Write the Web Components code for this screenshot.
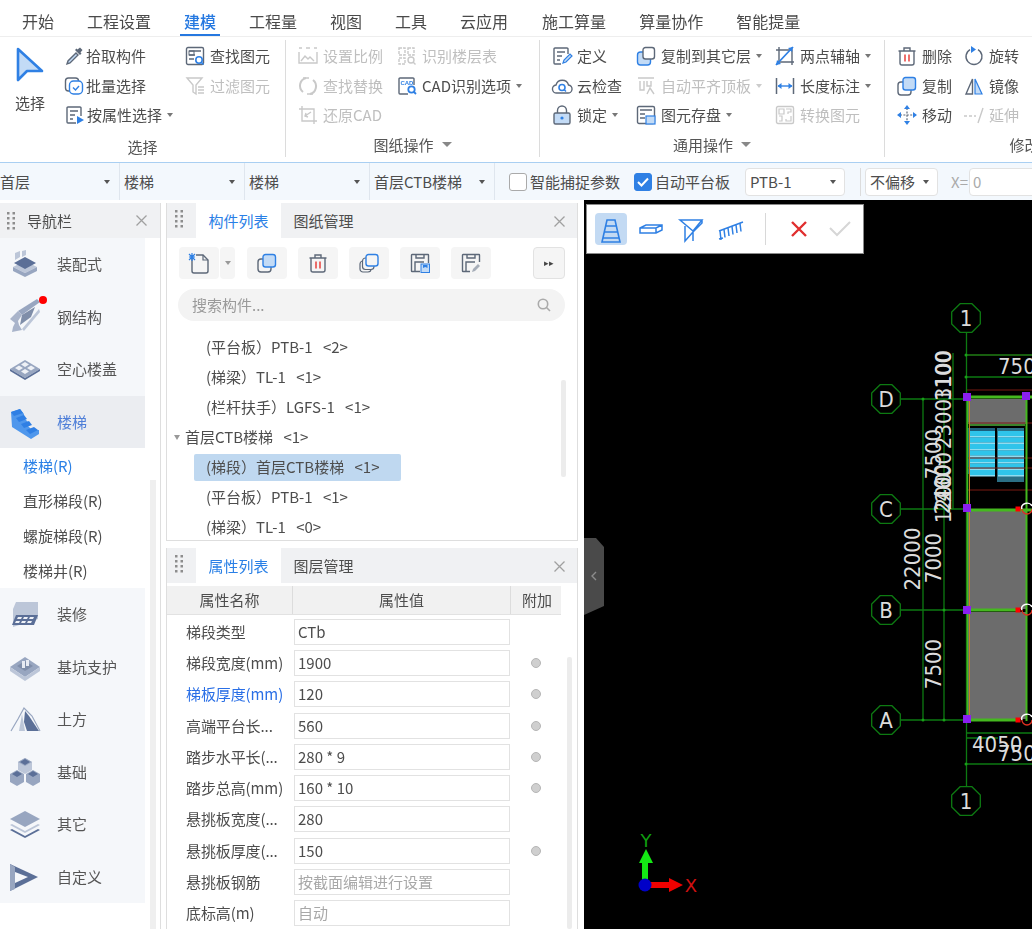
<!DOCTYPE html>
<html lang="zh">
<head>
<meta charset="utf-8">
<title>建模</title>
<style>
  html, body { margin: 0; height: 100%; overflow: hidden; background: #fff; }
  body { font: 15px/1.2 "Noto Sans CJK SC", "Liberation Sans", sans-serif; color: #4d4d4d; }
</style>
</head>
<body>
<app-shell>
  <ribbon-tabs active="建模" tabs="开始,工程设置,建模,工程量,视图,工具,云应用,施工算量,算量协作,智能提量"></ribbon-tabs>

  <ribbon-bar>
    <ribbon-group label="选择" low cols="49px 123px auto" pad="13" width="286">
      <big-tool style="grid-row: 1 / 4">选择</big-tool>
      <ribbon-item icon="pick" tight>拾取构件</ribbon-item>
      <ribbon-item icon="find">查找图元</ribbon-item>
      <ribbon-item icon="batch" tight>批量选择</ribbon-item>
      <ribbon-item icon="filter" off>过滤图元</ribbon-item>
      <ribbon-item icon="propsel" tight style="padding-left:1px" caret>按属性选择</ribbon-item>
    </ribbon-group>
    <ribbon-group label="图纸操作" more cols="99px auto" pad="12" width="254">
      <ribbon-item icon="scale" off>设置比例</ribbon-item>
      <ribbon-item icon="floor" off>识别楼层表</ribbon-item>
      <ribbon-item icon="replace" off>查找替换</ribbon-item>
      <ribbon-item icon="cadopt" caret>CAD识别选项</ribbon-item>
      <ribbon-item icon="restore" off>还原CAD</ribbon-item>
    </ribbon-group>
    <ribbon-group label="通用操作" more cols="84px 139px auto" pad="12" width="345">
      <ribbon-item icon="define">定义</ribbon-item>
      <ribbon-item icon="copyto" caret>复制到其它层</ribbon-item>
      <ribbon-item icon="twopoint" caret>两点辅轴</ribbon-item>
      <ribbon-item icon="cloud">云检查</ribbon-item>
      <ribbon-item icon="align" off caret>自动平齐顶板</ribbon-item>
      <ribbon-item icon="length" caret>长度标注</ribbon-item>
      <ribbon-item icon="lock" caret>锁定</ribbon-item>
      <ribbon-item icon="store" caret>图元存盘</ribbon-item>
      <ribbon-item icon="convert" off>转换图元</ribbon-item>
    </ribbon-group>
    <ribbon-group label="修改" cols="67px auto" pad="12" width="280">
      <ribbon-item icon="trash">删除</ribbon-item>
      <ribbon-item icon="rotate">旋转</ribbon-item>
      <ribbon-item icon="copy">复制</ribbon-item>
      <ribbon-item icon="mirror">镜像</ribbon-item>
      <ribbon-item icon="move">移动</ribbon-item>
      <ribbon-item icon="extend" off>延伸</ribbon-item>
    </ribbon-group>
  </ribbon-bar>

  <option-bar>
    <floor-select width="120" pad="0">首层</floor-select>
    <floor-select width="125">楼梯</floor-select>
    <floor-select width="125">楼梯</floor-select>
    <floor-select width="125">首层CTB楼梯</floor-select>
    <check-opt style="margin-left:14px">智能捕捉参数</check-opt>
    <check-opt checked style="margin-left:14px">自动平台板</check-opt>
    <box-select width="100" style="margin-left:15px">PTB-1</box-select>
    <bar-sep></bar-sep>
    <box-select width="73">不偏移</box-select>
    <coord-input label="X=" value="0"></coord-input>
  </option-bar>

  <main-row>
    <nav-panel>
      <nav-item icon="prefab">装配式</nav-item>
      <nav-item icon="steel" dot>钢结构</nav-item>
      <nav-item icon="hollow">空心楼盖</nav-item>
      <nav-item icon="stairs" active>楼梯</nav-item>
      <nav-sub current>楼梯(R)</nav-sub>
      <nav-sub>直形梯段(R)</nav-sub>
      <nav-sub>螺旋梯段(R)</nav-sub>
      <nav-sub>楼梯井(R)</nav-sub>
      <nav-item icon="finish">装修</nav-item>
      <nav-item icon="pit">基坑支护</nav-item>
      <nav-item icon="earth">土方</nav-item>
      <nav-item icon="found">基础</nav-item>
      <nav-item icon="other">其它</nav-item>
      <nav-item icon="custom">自定义</nav-item>
    </nav-panel>

    <mid-column>
      <dock-panel tab="构件列表" tab2="图纸管理" height="338">
        <comp-tools></comp-tools>
        <search-box placeholder="搜索构件..."></search-box>
        <tree-row>(平台板）PTB-1 &lt;2&gt;</tree-row>
        <tree-row>(梯梁）TL-1 &lt;1&gt;</tree-row>
        <tree-row>(栏杆扶手）LGFS-1 &lt;1&gt;</tree-row>
        <tree-row parent>首层CTB楼梯 &lt;1&gt;</tree-row>
        <tree-row selected>(梯段）首层CTB楼梯 &lt;1&gt;</tree-row>
        <tree-row>(平台板）PTB-1 &lt;1&gt;</tree-row>
        <tree-row>(梯梁）TL-1 &lt;0&gt;</tree-row>
        <scroll-thumb style="right:11px;top:177px;height:97px"></scroll-thumb>
      </dock-panel>
      <dock-panel tab="属性列表" tab2="图层管理" grow>
        <prop-head></prop-head>
        <prop-row value="CTb" plain>梯段类型</prop-row>
        <prop-row value="1900">梯段宽度(mm)</prop-row>
        <prop-row value="120" hot>梯板厚度(mm)</prop-row>
        <prop-row value="560">高端平台长...</prop-row>
        <prop-row value="280 * 9">踏步水平长(...</prop-row>
        <prop-row value="160 * 10">踏步总高(mm)</prop-row>
        <prop-row value="280" plain>悬挑板宽度(...</prop-row>
        <prop-row value="150">悬挑板厚度(...</prop-row>
        <prop-row value="按截面编辑进行设置" muted plain>悬挑板钢筋</prop-row>
        <prop-row value="自动" muted plain>底标高(m)</prop-row>
        <scroll-thumb style="right:5px;top:109px;bottom:0"></scroll-thumb>
      </dock-panel>
    </mid-column>

    <cad-canvas></cad-canvas>
  </main-row>
</app-shell>

<script>
const G = "#5d6878", B = "#2f80e4", L = "#c3dbf6", D = "#c9c9c9", R = "#e8403c";

// ribbon / toolbar icons, 20x20
const ICONS = {
  pick: `<path d="M12 7 4 15l-1 3 3-1 8-8z" fill="${L}" stroke="${G}" stroke-width="1.4"/><path d="M11 4l5 5 1.5-1.500-1-1 2-2.500-2.500-2.500-2.500 2-1-1z" fill="${G}"/>`,
  batch: `<rect x="1.500" y="2" width="13" height="13" rx="3" fill="none" stroke="${G}" stroke-width="1.4"/><rect x="5.500" y="5" width="13" height="13" rx="4" fill="#fff" stroke="${B}" stroke-width="1.4"/><path d="M9 11.500l2.500 2.500 3.500-4" fill="none" stroke="${B}" stroke-width="1.4"/>`,
  propsel: `<path d="M16 11V3a1 1 0 0 0-1-1H3a1 1 0 0 0-1 1v14a1 1 0 0 0 1 1h8" fill="none" stroke="${G}" stroke-width="1.4"/><path d="M5 6h8M5 10h5M5 14h3" stroke="${G}" stroke-width="1.4"/><path d="M12 11l7 4-7 4z" fill="${B}"/>`,
  find: `<rect x="1.500" y="1.500" width="17" height="17" rx="1.500" fill="none" stroke="${G}" stroke-width="1.4"/><path d="M4 5h12M4 9h6M4 13h5" stroke="${G}" stroke-width="1.4"/><rect x="4" y="5" width="5" height="4" fill="none" stroke="${G}"/><circle cx="14" cy="14" r="3.200" fill="#fff" stroke="${B}" stroke-width="1.6"/><path d="M16 16l2.500 2.500" stroke="${B}" stroke-width="1.6"/>`,
  filter: `<path d="M2 2h15l-6 7v9l-3-2V9z" fill="none" stroke="${D}" stroke-width="1.4"/><path d="M13 11h6M13 14h6M13 17h6" stroke="${D}" stroke-width="1.4"/>`,
  scale: `<path d="M1 2h3M8 2h4M16 2h3M1 6v11h18V6" fill="none" stroke="${D}" stroke-width="1.4"/><path d="M3 15l4-5 3 3 2-2 4 4" fill="none" stroke="${D}" stroke-width="1.4"/>`,
  floor: `<path d="M2 2h6v7H2zM11 2h6v7h-6zM2 12h6v6H2z" fill="none" stroke="${D}" stroke-width="1.4" stroke-dasharray="3 1"/><circle cx="14" cy="14" r="3" fill="none" stroke="${D}" stroke-width="1.4"/><path d="M16 16l2.500 2.500" stroke="${D}" stroke-width="1.4"/>`,
  replace: `<path d="M8 2a8 8 0 0 0-3 14M12 18a8 8 0 0 0 3-14" fill="none" stroke="${D}" stroke-width="2"/><path d="M5 2h6M9 18h6" stroke="${D}" stroke-width="1.4"/>`,
  cadopt: `<path d="M17 9V3a1 1 0 0 0-1-1H3a1 1 0 0 0-1 1v14a1 1 0 0 0 1 1h8" fill="none" stroke="${G}" stroke-width="1.4"/><text x="3.400" y="8.600" font-size="6" font-weight="700" fill="${B}" font-family="Liberation Sans">CAD</text><circle cx="14.500" cy="13.500" r="3.200" fill="#fff" stroke="${B}" stroke-width="1.8"/><path d="M16.500 15.500l2.500 2.500" stroke="${B}" stroke-width="1.8"/>`,
  restore: `<path d="M4 1v15h15M1 4h15v15" fill="none" stroke="${D}" stroke-width="1.4"/><path d="M7 11l6-4M8 8l-1 3 3 1" fill="none" stroke="${D}" stroke-width="1.4"/>`,
  define: `<path d="M16 8V3a1 1 0 0 0-1-1H3a1 1 0 0 0-1 1v14a1 1 0 0 0 1 1h6" fill="none" stroke="${G}" stroke-width="1.4"/><path d="M5 6h8M5 10h5M5 14h3" stroke="${G}" stroke-width="1.4"/><path d="M11 17l1-3 6-6 2 2-6 6z" fill="${L}" stroke="${B}" stroke-width="1.2"/>`,
  cloud: `<path d="M5 17a4 4 0 0 1-1-8 6.500 6.500 0 0 1 12.500 0 4 4 0 0 1-1 8z" fill="none" stroke="${G}" stroke-width="1.4"/><circle cx="10" cy="11.500" r="3" fill="none" stroke="${B}" stroke-width="1.6"/><path d="M12 13.500l2 2" stroke="${B}" stroke-width="1.4"/>`,
  lock: `<rect x="2" y="8" width="16" height="11" rx="1.500" fill="${L}" stroke="${G}" stroke-width="1.4"/><path d="M5.500 8V5.500a4.500 4.500 0 0 1 9 0V8" fill="none" stroke="${G}" stroke-width="1.4"/><circle cx="10" cy="13" r="1.600" fill="${B}"/>`,
  copyto: `<rect x="1.500" y="6" width="13" height="13" rx="3" fill="${L}" stroke="${B}" stroke-width="1.4"/><rect x="7" y="1.500" width="11.500" height="11.500" rx="2.500" fill="#fff" stroke="${G}" stroke-width="1.4"/>`,
  align: `<path d="M2 2h16M4 5v9h4V5M11 5v5h4V5M11 18l3-6 4 6" fill="none" stroke="${D}" stroke-width="1.4"/>`,
  store: `<rect x="1.500" y="1.500" width="17" height="17" rx="1.500" fill="none" stroke="${G}" stroke-width="1.4"/><path d="M4 5h12M4 9h5M4 13h5" stroke="${G}" stroke-width="1.4"/><rect x="10" y="11" width="9" height="8" fill="${L}" stroke="${B}" stroke-width="1.2"/>`,
  twopoint: `<path d="M4 1v15h15M1 4h16v15" fill="none" stroke="${G}" stroke-width="1.4"/><path d="M1 19L18 1" stroke="${B}" stroke-width="1.8"/><path d="M1 19l5-1-4-4zM18 1l-5 1 4 4z" fill="${B}"/>`,
  length: `<path d="M1.500 2v16M18.500 2v16" stroke="${G}" stroke-width="1.500"/><path d="M3 10h14" stroke="${B}" stroke-width="1.4"/><path d="M2.500 10l4-3v6zM17.500 10l-4-3v6z" fill="${B}"/>`,
  convert: `<rect x="1.500" y="1.500" width="17" height="17" rx="1.500" fill="none" stroke="${D}" stroke-width="1.4"/><path d="M4 4h5v5H4zM11 4h5v3h-3v2M4 11h3v5H4M16 11v5h-5v-2" fill="none" stroke="${D}" stroke-width="1.2"/>`,
  trash: `<path d="M3 5h14v12a2 2 0 0 1-2 2H5a2 2 0 0 1-2-2zM1.500 5h17M7 5V2h6v3" fill="none" stroke="${G}" stroke-width="1.4"/><path d="M8 8.500v7M12 8.500v7" stroke="${R}" stroke-width="1.500"/>`,
  rotate: `<path d="M14 3.600a8 8 0 1 1-8 0" fill="none" stroke="${G}" stroke-width="1.4"/><path d="M7 0v7l5-3.500z" fill="${B}"/>`,
  copy: `<rect x="1" y="6" width="13" height="13" rx="3" fill="none" stroke="${G}" stroke-width="1.4"/><rect x="6" y="1.500" width="12.500" height="12.500" rx="2.500" fill="${L}" stroke="${B}" stroke-width="1.4"/>`,
  mirror: `<path d="M8.500 3 2 18h6.500z" fill="none" stroke="${G}" stroke-width="1.4"/><path d="M11 3l7 15h-7z" fill="${L}" stroke="${B}" stroke-width="1.2"/>`,
  move: `<path d="M10 3v14M3 10h14" stroke="${G}" stroke-width="1.2" stroke-dasharray="2 1.400"/><path d="M10 0l3 4H7zM10 20l3-4H7zM0 10l4-3v6zM20 10l-4-3v6z" fill="${B}"/>`,
  extend: `<path d="M0 11h3M5 11h3M10 11h2M14 18l5-15" stroke="${D}" stroke-width="1.4" fill="none"/>`,
  newdoc: `<path d="M3 6v12a2 2 0 0 0 2 2h12a2 2 0 0 0 2-2V7l-5-5H7" fill="none" stroke="${G}" stroke-width="1.4"/><path d="M14 2v5h5" fill="none" stroke="${G}" stroke-width="1.2"/><path d="M0 1l6 6M6 1 0 7M3 0v8M0 4h6" stroke="${B}" stroke-width="1.2"/>`,
  stack: `<rect x="1" y="8" width="11" height="11" rx="3" fill="none" stroke="${G}" stroke-width="1.2"/><rect x="3.500" y="5" width="11.500" height="11.500" rx="3" fill="#f5f5f5" stroke="${G}" stroke-width="1.2"/><rect x="7" y="1.500" width="12" height="11.500" rx="2.500" fill="#f5f5f5" stroke="${B}" stroke-width="1.4"/>`,
  save: `<path d="M2 1.500h16a.5.5 0 0 1 .5.5v8M2 1.500a.5.5 0 0 0-.5.5v16a.5.5 0 0 0 .5.5h8M5 18V9h9M6 1.500V5h8V1.500" fill="none" stroke="${G}" stroke-width="1.4"/><rect x="11" y="11" width="8.500" height="8.500" fill="${L}" stroke="${B}"/><path d="M13 12h4.500v3l-2.200-1-2.300 1z" fill="${B}"/>`,
  edit: `<path d="M2 1.500h16a.5.5 0 0 1 .5.5v7M2 1.500a.5.5 0 0 0-.5.5v16a.5.5 0 0 0 .5.5h7M5 18V9h9M6 1.500V5h8V1.500" fill="none" stroke="${G}" stroke-width="1.4"/><path d="M11 19l1-3 5-5 2 2-5 5z" fill="#a6adb8"/>`,
  // canvas toolbar
  flight: `<path d="M8 3h8l5 22H3zM6.500 9h11M5 15h14M3.500 21h17" fill="none" stroke="${B}" stroke-width="1.600"/>`,
  beam: `<path d="M1 11l6-3h16v5l-6 3H1zM1 11h16l6-3M17 11v5" fill="none" stroke="${B}" stroke-width="1.500"/>`,
  landing: `<path d="M1 3h22l-9 11zM14 3h9v3l-9 9v9M6 9v15l8-9" fill="none" stroke="${B}" stroke-width="1.500"/>`,
  rail: `<path d="M0 14 24 5M1 14l1 9M5 12.500l1 8M9 11l1 8M13 9.500l1 8M17 8l1 8M21 6.500l1 8M0 22l4-1" fill="none" stroke="${B}" stroke-width="1.500"/>`,
};

// navigation icons, 30x30, slate tones
const A = "#5b6f97", M = "#98a6c0", P = "#bcc6d8";
const NAV = {
  prefab: `<path d="M3 18l12-6 12 6-12 6z" fill="${P}"/><path d="M3 18v4l12 6 12-6v-4l-12 6z" fill="${M}"/><path d="M4 14l11-6 11 6-11 6z" fill="${A}"/><path d="M5 4l5-2v6l-5 3zM12 2l4-1v5l-4 2z" fill="${P}"/>`,
  steel: `<path d="M8 9 27-3l3 3L12 13z" fill="${M}"/><path d="M12 13 25 5l-4 10-11 8z" fill="#7f8ea9"/><path d="M12 27 29 7l1 3-16 19z" fill="${P}"/><path d="M0 17l8-8 4 4-4 6 1 4 3 5-10 2 1-5 2-4z" fill="#a9b4ca"/>`,
  hollow: `<path d="M15 6 30 15 15 24 0 15z" fill="${M}"/><path d="M15 8l4 2.500-4 2.500-4-2.500zM21 11.500l4 2.500-4 2.500-4-2.500zM9 11.500l4 2.500-4 2.500-4-2.500zM15 15l4 2.500-4 2.500-4-2.500z" fill="#eef1f6"/><path d="M0 15l15 9 15-9v2l-15 9L0 17z" fill="${A}"/>`,
  stairs: `<path d="M1 5l9-3 4 5 0 4 4 4 0 4 4 4 7 0 0 4-8 5L2 20z" fill="#4f97ec"/><path d="M1 5l9-3 3 4-9 3zM6 11l8-3 3 4-8 3zM11 17l8-3 3 4-8 3zM16 23l8-3 4 3-8 4z" fill="#2f7fe4"/>`,
  finish: `<path d="M6 3h22v17L3 28V10z" fill="${P}"/><path d="M6 16h22l-4 10H2z" fill="${A}"/><path d="M8 18h4l-1 2H7zM14 18h4l-1 2h-4zM20 18h4l-1 2h-4zM6 22h4l-1 2H5zM12 22h4l-1 2h-4zM18 22h4l-1 2h-4z" fill="#eef1f6"/>`,
  pit: `<path d="M15 5 30 15 15 25 0 15z" fill="${M}"/><path d="M0 15l15 10 15-10v4l-15 10L0 19z" fill="${P}"/><path d="M15 9l8 5-8 5-8-5z" fill="#7f8ea9"/><path d="M12 9h3v7h-3zM16 8h3v6h-3z" fill="#e7ebf2"/>`,
  earth: `<path d="M1 27 8 15l6-11 8 8 8 15" fill="none" stroke="${M}" stroke-width="1.200"/><path d="M15 7l4 5 10 15H17l-3-9z" fill="${A}"/><path d="M12 10l3 17H9z" fill="${P}"/>`,
  found: `<path d="M15 1l7 4v8l-7 4-7-4V5z" fill="${P}"/><path d="M15 1l7 4-7 4-7-4zM7 13l7 4v8l-7 4-7-4v-8zM23 13l7 4v8l-7 4-7-4v-8z" fill="${M}"/><path d="M15 2l5 3-5 3-5-3zM7 14l5 3-5 3-5-3zM23 14l5 3-5 3-5-3z" fill="${A}"/>`,
  other: `<path d="M15 2 30 10 15 18 0 10z" fill="${M}"/><path d="M2 15l13 7 13-7 2 1-15 8-15-8z" fill="${P}"/><path d="M2 20l13 7 13-7 2 1-15 8-15-8z" fill="${A}"/>`,
  custom: `<path d="M0 2l28 13L0 29z" fill="${A}"/><path d="M5 10l13 5L5 21z" fill="#f5f7fa"/><path d="M0 2l5 3v22l-5 2z" fill="${M}"/>`,
};

function svg(markup, size, box) {
  return `<svg xmlns="http://www.w3.org/2000/svg" width="${size}" height="${size}" viewBox="0 0 ${box} ${box}" style="display:block;overflow:visible">${markup}</svg>`;
}

// small helper so each element only declares css + markup
function define(name, build) {
  customElements.define(name, class extends HTMLElement {
    constructor() {
      super();
      this.attachShadow({ mode: "open" });
    }
    connectedCallback() {
      const [css, body] = build(this);
      this.shadowRoot.innerHTML = `<style>${css}</style>${body}`;
    }
  });
}

define("app-shell", () => [`:host{display:flex;flex-direction:column;width:1032px;height:929px;overflow:hidden;filter:blur(.35px)}`, `<slot></slot>`]);

define("ribbon-tabs", el => {
  const active = el.getAttribute("active");
  const tabs = el.getAttribute("tabs").split(",").map(t =>
    `<span class="${t === active ? "on" : ""}">${t}</span>`).join("");
  return [`:host{display:flex;flex:none;height:36px;gap:33px;padding-left:24px;border-bottom:1px solid #eee;font-size:16px;color:#4a4a4a}
    span{position:relative;line-height:42px;height:36px;white-space:nowrap}
    span:nth-child(2){margin-left:-2px}
    span:nth-child(9){margin-left:1px}
    .on{color:#2578e0;font-weight:500}
    .on::after{content:"";position:absolute;left:-4px;right:-4px;bottom:0;height:2px;background:#2578e0}`, tabs];
});

define("ribbon-bar", () => [`:host{display:flex;flex:none;height:125px;overflow:hidden}`, `<slot></slot>`]);

define("ribbon-group", el => {
  const more = el.hasAttribute("more");
  return [`:host{display:block;flex:none;box-sizing:border-box;position:relative;width:${el.getAttribute("width")}px;height:117px;margin-top:3px;border-right:1px solid #dcdcdc}
    .grid{display:grid;grid-template-columns:${el.getAttribute("cols")};grid-auto-rows:29.500px;padding:1.500px 0 0 ${el.getAttribute("pad")}px;justify-items:start}
    .label{display:flex;justify-content:center;align-items:center;gap:8px;height:22px;margin-top:${el.hasAttribute("low") ? 5.5 : 3.5}px;color:#555}
    i{width:0;height:0;border:5px solid transparent;border-top:5px solid #888;border-bottom:0}`,
    `<div class="grid"><slot></slot></div><div class="label">${el.getAttribute("label")}${more ? "<i></i>" : ""}</div>`];
});

define("big-tool", () => [`:host{display:flex;flex-direction:column;align-items:center;width:30px;margin-left:2px;color:#4a4a4a}
    svg{display:block;margin-top:5px;margin-bottom:11px}`,
  `<svg width="30" height="36" viewBox="0 0 30 36"><path d="M3 2 27 24H12L3 33z" fill="${L}" stroke="${B}" stroke-width="2.600" stroke-linejoin="round"/></svg><slot></slot>`]);

define("ribbon-item", el => {
  const off = el.hasAttribute("off");
  const tight = el.hasAttribute("tight");
  return [`:host{display:flex;align-items:center;height:29.500px;white-space:nowrap;color:${off ? "#bfbfbf" : "#4d4d4d"}}
    .ic{margin-right:${tight ? 2 : 5}px;margin-left:${tight ? 2 : 0}px}
    i{width:0;height:0;margin-left:5px;border:3.500px solid transparent;border-top:4px solid ${off ? "#ccc" : "#777"};border-bottom:0}`,
    `<span class="ic">${svg(ICONS[el.getAttribute("icon")], 20, 20)}</span><slot></slot>${el.hasAttribute("caret") ? "<i></i>" : ""}`];
});

define("option-bar", () => [`:host{display:flex;align-items:center;flex:none;box-sizing:border-box;height:38px;background:#f3f8fd;border-top:1.500px solid #a9cff2;overflow:hidden;white-space:nowrap}`, `<slot></slot>`]);

define("floor-select", el => [`:host{display:flex;align-items:center;justify-content:space-between;flex:none;box-sizing:border-box;height:100%;align-self:stretch;width:${el.getAttribute("width")}px;padding:0 9px 0 ${el.getAttribute("pad") ?? 4}px;border-right:1px solid #dfe6ee}
    i{width:0;height:0;border:3.500px solid transparent;border-top:4px solid #555;border-bottom:0}`,
  `<slot></slot><i></i>`]);

define("check-opt", el => {
  const on = el.hasAttribute("checked");
  return [`:host{display:flex;align-items:center;gap:3px}
    b{display:block;box-sizing:border-box;width:18px;height:18px;border-radius:3px;border:1px solid ${on ? B : "#aaa"};background:${on ? B : "#fff"}}
    svg{display:block}`,
    `<b>${on ? `<svg width="16" height="16" viewBox="0 0 16 16"><path d="M3 8l3.500 3.500L13 4.500" fill="none" stroke="#fff" stroke-width="2"/></svg>` : ""}</b><slot></slot>`];
});

define("box-select", el => [`:host{display:flex;align-items:center;justify-content:space-between;flex:none;box-sizing:border-box;height:28px;width:${el.getAttribute("width")}px;padding:0 8px 0 4px;background:#fff;border:1px solid #e2e2e2;border-radius:4px}
    i{width:0;height:0;border:3.500px solid transparent;border-top:4px solid #555;border-bottom:0}`,
  `<slot></slot><i></i>`]);

define("bar-sep", () => [`:host{display:block;flex:none;width:1px;height:28px;margin:0 4px 0 15px;background:#dcdcdc}`, ``]);

define("coord-input", el => [`:host{display:flex;align-items:center;flex:none;margin-left:13px;color:#aaa}
    div{box-sizing:border-box;width:70px;height:28px;line-height:26px;margin-left:1px;padding-left:3px;background:#fff;border:1px solid #e2e2e2;border-radius:4px}`,
  `${el.getAttribute("label")}<div>${el.getAttribute("value")}</div>`]);

define("main-row", () => [`:host{display:flex;flex:1;min-height:0}`, `<slot></slot>`]);

const GRIP = `<svg width="8" height="18" viewBox="0 0 8 18"><g fill="#8d8d8d"><rect width="2.500" height="2.500"/><rect x="5.500" width="2.500" height="2.500"/><rect y="5" width="2.500" height="2.500"/><rect x="5.500" y="5" width="2.500" height="2.500"/><rect y="10" width="2.500" height="2.500"/><rect x="5.500" y="10" width="2.500" height="2.500"/><rect y="15" width="2.500" height="2.500"/><rect x="5.500" y="15" width="2.500" height="2.500"/></g></svg>`;
const CLOSE = `<svg width="11" height="11" viewBox="0 0 11 11"><path d="M.5.5l10 10M10.500.5l-10 10" stroke="#a0a0a0" stroke-width="1.3"/></svg>`;

define("nav-panel", () => [`:host{display:block;flex:none;position:relative;box-sizing:border-box;width:161px;margin-top:3px;border-right:1px solid #dedede;overflow:hidden}
    header{display:flex;align-items:center;height:35px;background:#f0f1f3;padding:0 13px 0 7px}
    header span{margin-left:12px;flex:1}
    .list{width:145px}
    .track{position:absolute;left:150px;top:277px;bottom:0;width:6px;background:#efefef}`,
  `<header>${GRIP}<span>导航栏</span>${CLOSE}</header><div class="list"><slot></slot></div><div class="track"></div>`]);

define("nav-item", el => {
  const active = el.hasAttribute("active");
  return [`:host{display:flex;align-items:center;position:relative;height:52.500px;padding-left:10px;background:${active ? "#ebedf1" : "#f5f7fa"};color:${active ? "#4f7fd8" : "#555"}}
    .ic{width:47px}
    .dot{position:absolute;left:39px;top:5px;width:8px;height:8px;border-radius:50%;background:#f00}`,
    `<span class="ic">${svg(NAV[el.getAttribute("icon")], 30, 30)}</span><slot></slot>${el.hasAttribute("dot") ? '<span class="dot"></span>' : ""}`];
});

define("nav-sub", el => [`:host{display:flex;align-items:center;height:35px;padding-left:23px;background:#fff;font-size:15px;color:${el.hasAttribute("current") ? "#2a80e6" : "#4d4d4d"}}`, `<slot></slot>`]);

define("mid-column", () => [`:host{display:flex;flex-direction:column;flex:none;gap:7px;width:412px;margin:3px 6px 0 5px}`, `<slot></slot>`]);

define("dock-panel", el => {
  const grow = el.hasAttribute("grow");
  return [`:host{display:block;position:relative;box-sizing:border-box;overflow:hidden;${grow ? "flex:1;min-height:0;" : `flex:none;height:${el.getAttribute("height")}px;`}border:1px solid #dedede;border-bottom-width:${grow ? 0 : 1}px;border-top:0;background:#fff}
    header{display:flex;align-items:stretch;height:35px;background:#f0f1f3;padding-left:8px;margin-bottom:0}
    header .g{align-self:center;margin-right:13px}
    header span{display:flex;align-items:center;justify-content:center;width:85px;color:#4d4d4d}
    header .on{background:#fff;color:#2a80e6}
    header .x{margin:auto 12px auto auto}`,
    `<header><div class="g">${GRIP}</div><span class="on">${el.getAttribute("tab")}</span><span>${el.getAttribute("tab2")}</span><div class="x">${CLOSE}</div></header><slot></slot>`];
});

define("comp-tools", () => {
  const btn = (name, extra = "") => `<button style="${extra}">${svg(ICONS[name], 20, 20)}</button>`;
  return [`:host{display:flex;align-items:center;height:32px;margin-top:9px;padding:0 12px}
    button{display:flex;align-items:center;justify-content:center;flex:none;width:40px;height:32px;padding:0;border:0;border-radius:4px;background:#f5f5f5}
    .drop{width:15px;margin:0 12px 0 1px}
    .drop i{width:0;height:0;border:3px solid transparent;border-top:4px solid #999;border-bottom:0}
    .more{width:32px;margin-left:auto;border:1px solid #e2e2e2;font-size:9px;color:#444}`,
    `${btn("newdoc", "margin-left:0")}<button class="drop"><i></i></button>${btn("copy", "margin-right:11px")}${btn("trash", "margin-right:11px")}${btn("stack", "margin-right:11px")}${btn("save", "margin-right:11px")}${btn("edit")}<button class="more">▸▸</button>`];
});

define("search-box", el => [`:host{display:flex;align-items:center;justify-content:space-between;box-sizing:border-box;height:32px;margin:10px 12px 11px 11px;padding:0 14px;border-radius:16px;background:#f3f3f3;color:#9a9a9a}`,
  `${el.getAttribute("placeholder")}<svg width="14" height="14" viewBox="0 0 14 14"><circle cx="6" cy="6" r="4.700" fill="none" stroke="#aaa" stroke-width="1.6"/><path d="M9.500 9.500l3.500 3.500" stroke="#aaa" stroke-width="1.6"/></svg>`]);

define("tree-row", el => {
  const sel = el.hasAttribute("selected");
  const parent = el.hasAttribute("parent");
  return [`:host{display:flex;align-items:center;height:30px;white-space:nowrap;color:#4d4d4d;word-spacing:7px;padding-left:${parent ? 7 : 27}px}
    .t{display:flex;align-items:center;height:27px;border-radius:2px;padding:0 21px 0 12px;${sel ? "background:#bfd8f0;" : ""}}
    :host([parent]) .t{padding-left:5px}
    i{width:0;height:0;border:3.500px solid transparent;border-top:5px solid #999;border-bottom:0}`,
    `${parent ? "<i></i>" : ""}<span class="t"><slot></slot></span>`];
});

define("scroll-thumb", () => [`:host{display:block;position:absolute;width:5px;background:#ececec;border-radius:2px}`, ``]);

define("prop-head", () => [`:host{display:grid;grid-template-columns:126px 218px 50px;width:394px;height:29px;margin-top:3px;background:#f1f1f1;border-bottom:1px solid #e2e2e2;box-sizing:border-box}
    span{display:flex;align-items:center;justify-content:center;border-right:1px solid #dcdcdc}`,
  `<span>属性名称</span><span>属性值</span><span style="border:0;padding-left:2px">附加</span>`]);

define("prop-row", el => {
  const dot = !el.hasAttribute("plain");
  return [`:host{display:flex;align-items:center;height:31.300px;padding-left:19px;white-space:nowrap;color:${el.hasAttribute("hot") ? "#2a6fe6" : "#4d4d4d"}}
    :host(:first-of-type){margin-top:1px}
    .n{width:108px;font-size:15px;letter-spacing:-.1px}
    .v{box-sizing:border-box;width:216px;height:26px;line-height:24px;padding-left:3px;border:1px solid #e2e2e2;color:${el.hasAttribute("muted") ? "#a8a8a8" : "#4d4d4d"}}
    .d{width:10px;height:10px;margin-left:21px;box-sizing:border-box;border-radius:50%;background:#cfcfcf;border:1px solid #b5b5b5}`,
    `<span class="n"><slot></slot></span><span class="v">${el.getAttribute("value")}</span>${dot ? '<span class="d"></span>' : ""}`];
});

define("cad-canvas", () => {
  const GR = "#0d7a12", DR = "#7a1a12", WH = "#dcdcdc";
  const octa = (cx, cy, label) => {
    const pts = [];
    for (let i = 0; i < 8; i++) {
      const a = Math.PI / 8 + i * Math.PI / 4;
      pts.push((cx + 15.5 * Math.cos(a)).toFixed(1) + "," + (cy + 15.5 * Math.sin(a)).toFixed(1));
    }
    return `<polygon points="${pts.join(" ")}" fill="none" stroke="${GR}" stroke-width="1.3"/><text x="${cx}" y="${cy + 8}" text-anchor="middle" font-size="22" fill="${WH}">${label}</text>`;
  };
  const vtext = (x, y, s) => `<text transform="translate(${x} ${y}) rotate(-90)" text-anchor="middle" fill="${WH}">${s}</text>`;
  const sq = (x, y, c, w = 8) => `<rect x="${x - w / 2}" y="${y - w / 2}" width="${w}" height="${w}" fill="${c}"/>`;
  let stripes = "";
  for (let y = 431; y < 472; y += 6.5) {
    stripes += `<rect x="969" y="${y}" width="26" height="5" fill="#2fc4ea"/><rect x="998" y="${y}" width="26" height="5" fill="#2fc4ea"/><rect x="969" y="${y + 5}" width="26" height="1.500" fill="#8fdcf0"/><rect x="998" y="${y + 5}" width="26" height="1.500" fill="#8fdcf0"/>`;
  }
  const curl = y => sq(1018, y, "#f00", 5) + `<path d="M1022 ${y}a5 4 0 0 1 10-3" fill="none" stroke="#fff" stroke-width="1.5"/><path d="M1022 ${y}a5 5 0 0 0 10 0" fill="none" stroke="#e03020" stroke-width="1.3"/>`;
  const drawing = `
    <g fill="#6c6c6c"><rect x="968" y="399" width="58" height="25"/><rect x="968" y="511" width="58" height="98"/><rect x="968" y="612" width="58" height="107"/></g>
    <rect x="968" y="428" width="27" height="46" fill="#1d5f7c"/><rect x="997" y="428" width="27" height="54" fill="#2b6f85"/>
    ${stripes}
    <g stroke="${DR}" stroke-width="1.2"><path d="M966 355h66M966 390h66M966 423h66M966 458h66M966 468h66M966 490h66"/></g>
    <path d="M969 425h56" stroke="#4fae3a" stroke-width="1.500"/>
    <g stroke="${GR}" stroke-width="1.3" fill="none">
      <path d="M966.500 333v453M901 399h65M901 509h65M901 610h65M901 720h65M923 399v321M944 399v321M953 353v156M966 355h66M966 377h66M966 733h66M966 738h32M966 764h66"/>
    </g>
    <g fill="#18a018"><circle cx="923" cy="399" r="1.500"/><circle cx="923" cy="720" r="1.500"/><circle cx="944" cy="610" r="1.500"/><circle cx="944" cy="720" r="1.500"/><circle cx="966" cy="355" r="1.500"/><circle cx="966" cy="377" r="1.500"/><circle cx="966" cy="764" r="1.500"/></g>
    <g stroke="#45b81f" fill="none"><path d="M966 397h66M966 510h66M966 610h52M966 720h52" stroke-width="3"/><path d="M967.500 397v324" stroke-width="1.500"/><path d="M1026.500 397v324" stroke-width="2"/></g>
    <path d="M969.500 397v324" stroke="#c87a28" stroke-width="1"/>
    ${sq(967, 397, "#8a1ff0")}${sq(1026, 396, "#8a1ff0")}${sq(967, 508, "#8a1ff0")}${sq(967, 610, "#8a1ff0")}${sq(967, 719, "#8a1ff0")}
    ${curl(509)}${curl(610)}${curl(720)}
    <g font-family="DejaVu Sans Condensed, DejaVu Sans, sans-serif" font-stretch="condensed" font-size="22">
      ${octa(966, 318, "1")}${octa(886, 399, "D")}${octa(886, 509, "C")}${octa(886, 610, "B")}${octa(886, 720, "A")}${octa(966, 801, "1")}
      ${vtext(951, 376, "1100")}${vtext(951, 375, "3100")}${vtext(951, 424, "2300")}
      ${vtext(941, 454, "7500")}${vtext(951, 477, "2600")}${vtext(950, 489, "2400")}${vtext(951, 498, "1200")}
      ${vtext(920, 559, "22000")}${vtext(941, 558, "7000")}${vtext(941, 664, "7500")}
      <text x="998" y="374" fill="${WH}">750</text>
      <text x="972" y="752" fill="${WH}">4050</text>
      <text x="998" y="761" fill="${WH}">750</text>
    </g>
    <path d="M645 885V858" stroke="#14e814" stroke-width="6"/><path d="M646 849l7 14h-14z" fill="#14e814"/>
    <path d="M650 885h24" stroke="#f00100" stroke-width="6"/><path d="M683 885l-14-7v14z" fill="#f00100"/>
    <circle cx="645" cy="885" r="6.500" fill="#0000c8"/>
    <g font-family="DejaVu Sans, sans-serif" font-size="18">
      <text x="646" y="847" text-anchor="middle" fill="#0f9f0f">Y</text>
      <text x="691" y="892" text-anchor="middle" fill="#d01010">X</text>
    </g>
    <path d="M584 538h12l8 9v59l-20 9z" fill="#4a4a4a"/>
    <path d="M596 572l-4 4 4 4" fill="none" stroke="#8c8c8c" stroke-width="1.400"/>`;
  const tool = (name, cls = "") => `<span class="t ${cls}">${svg(ICONS[name], 24, 24)}</span>`;
  return [`:host{display:block;flex:1;position:relative;background:#000;overflow:hidden}
    svg.draw{display:block}
    .bar{position:absolute;left:2px;top:4px;display:flex;align-items:center;box-sizing:border-box;width:278px;height:50px;padding-left:8px;background:#fff;border:1px solid #8a8a8a}
    .t{display:flex;align-items:center;justify-content:center;width:32px;height:32px;border-radius:4px;margin-right:8px}
    .on{background:#c3daf3}
    .s{width:1px;height:32px;margin:0 25px 0 10px;background:#d8d8d8}`,
    `<svg class="draw" width="448" height="729" viewBox="584 200 448 729">${drawing}</svg>
    <div class="bar">${tool("flight", "on")}${tool("beam")}${tool("landing")}${tool("rail")}<span class="s"></span>
      <svg width="16" height="16" viewBox="0 0 16 16"><path d="M1 1l14 14M15 1 1 15" stroke="#e02f2f" stroke-width="2.400"/></svg>
      <svg style="margin-left:22px" width="22" height="16" viewBox="0 0 22 16"><path d="M1 7l7 7L21 1" fill="none" stroke="#d6d6d6" stroke-width="2"/></svg>
    </div>`];
});
</script>
</body>
</html>
